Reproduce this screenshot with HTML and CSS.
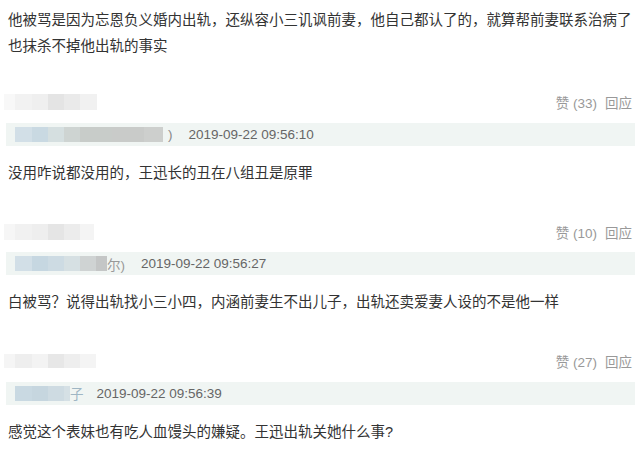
FILE: index.html
```html
<!DOCTYPE html>
<html lang="zh-CN">
<head>
    <meta charset="UTF-8">
    <meta name="viewport" content="width=device-width, initial-scale=1.0">
    <title>评论</title>
    <link rel="stylesheet" href="styles.css">
</head>
<body>

    <div class="comments">

        <!-- 评论 1 -->
        <p class="text">他被骂是因为忘恩负义婚内出轨，还纵容小三讥讽前妻，他自己都认了的，就算帮前妻联系治病了也抹杀不掉他出轨的事实</p>
        <div class="foot">
            <span class="mask name-a"></span>
            <span class="actions"><span>赞 (33)</span><span>回应</span></span>
        </div>
        <div class="info">
            <span class="mask user-a"></span>
            <span class="tail tail-a">)</span>
            <span class="time">2019-09-22 09:56:10</span>
        </div>

        <!-- 评论 2 -->
        <p class="text">没用咋说都没用的，王迅长的丑在八组丑是原罪</p>
        <div class="foot">
            <span class="mask name-b"></span>
            <span class="actions"><span>赞 (10)</span><span>回应</span></span>
        </div>
        <div class="info">
            <span class="mask user-b"></span>
            <span class="tail tail-b">尔)</span>
            <span class="time">2019-09-22 09:56:27</span>
        </div>

        <!-- 评论 3 -->
        <p class="text">白被骂？说得出轨找小三小四，内涵前妻生不出儿子，出轨还卖爱妻人设的不是他一样</p>
        <div class="foot">
            <span class="mask name-c"></span>
            <span class="actions"><span>赞 (27)</span><span>回应</span></span>
        </div>
        <div class="info">
            <span class="mask user-c"></span>
            <span class="tail tail-c">子</span>
            <span class="time">2019-09-22 09:56:39</span>
        </div>

        <!-- 评论 4 -->
        <p class="text">感觉这个表妹也有吃人血馒头的嫌疑。王迅出轨关她什么事?</p>

    </div>

</body>
</html>
```

FILE: styles.css
```css
* {
    margin: 0;
    padding: 0;
    box-sizing: border-box;
}

body {
    background: #fff;
    font-family: "Liberation Sans", "Noto Sans CJK SC", sans-serif;
    color: #333;
}

.comments {
    display: flex;
    flex-direction: column;
    padding: 7px 5px 0 4px;
}

/* 评论正文 */
.text {
    padding-left: 4px;
    font-size: 14.5px;
    line-height: 26px;
    color: #333;
}

.info + .text {
    margin-top: 14px;
}

/* 用户名 + 赞/回应 */
.foot {
    display: flex;
    justify-content: space-between;
    align-items: center;
    height: 18px;
    margin-top: 37px;
}

.text:first-child + .foot {
    margin-top: 34px;
}

.actions {
    display: flex;
    gap: 8px;
    padding-right: 3px;
    font-size: 13.5px;
    color: #999;
}

/* 打码的昵称 */
.mask {
    display: block;
    height: 16px;
    filter: blur(0.7px);
}

.name-a {
    width: 93px;
    background: linear-gradient(90deg, #f8f8f8 0 11px, #f2f2f2 11px 28px, #efefef 28px 44px, #e4e4e4 44px 60px, #eaeaea 60px 76px, #f1f1f1 76px);
}

.name-b {
    width: 90px;
    background: linear-gradient(90deg, #f6f6f6 0 11px, #f1f1f1 11px 28px, #eeeeee 28px 44px, #e5e5e5 44px 60px, #ececec 60px 76px, #f4f4f4 76px);
}

.name-c {
    width: 92px;
    height: 14px;
    background: linear-gradient(90deg, #f5f5f5 0 11px, #eeeeee 11px 28px, #f3f3f3 28px 44px, #e7e7e7 44px 60px, #eeeeee 60px 76px, #f4f4f4 76px);
}

/* 灰色信息条 */
.info {
    display: flex;
    align-items: center;
    height: 23px;
    margin: 11.5px 0 0 2px;
    padding-left: 9px;
    background: #f0f5f3;
    font-size: 13.5px;
    color: #666;
}

.info .mask {
    height: 15px;
}

.user-a {
    width: 148px;
    background: linear-gradient(90deg, #d2dfe7 0 17px, #c9d9e2 17px 33px, #d5dfe0 33px 49px, #ced4d2 49px 65px, #c8ccc9 65px 97px, #c9cbc9 97px 129px, #cdcfcd 129px);
}

.user-b {
    width: 92px;
    background: linear-gradient(90deg, #d2dfe7 0 17px, #c6d7e1 17px 33px, #cddbe3 33px 49px, #d6e0e3 49px 65px, #cfd3d3 65px 81px, #c4c6c6 81px);
}

.user-c {
    width: 55px;
    background: linear-gradient(90deg, #c9d9e2 0 17px, #c6d6df 17px 33px, #cedbe2 33px 49px, #d5e0e5 49px);
}

.tail {
    color: #888;
}

.tail-a {
    margin-left: 5px;
}

.tail-b {
    color: #999;
}

.tail-c {
    margin-right: -3px;
    color: #9fb6c4;
}

.time {
    margin-left: 16px;
}
```
